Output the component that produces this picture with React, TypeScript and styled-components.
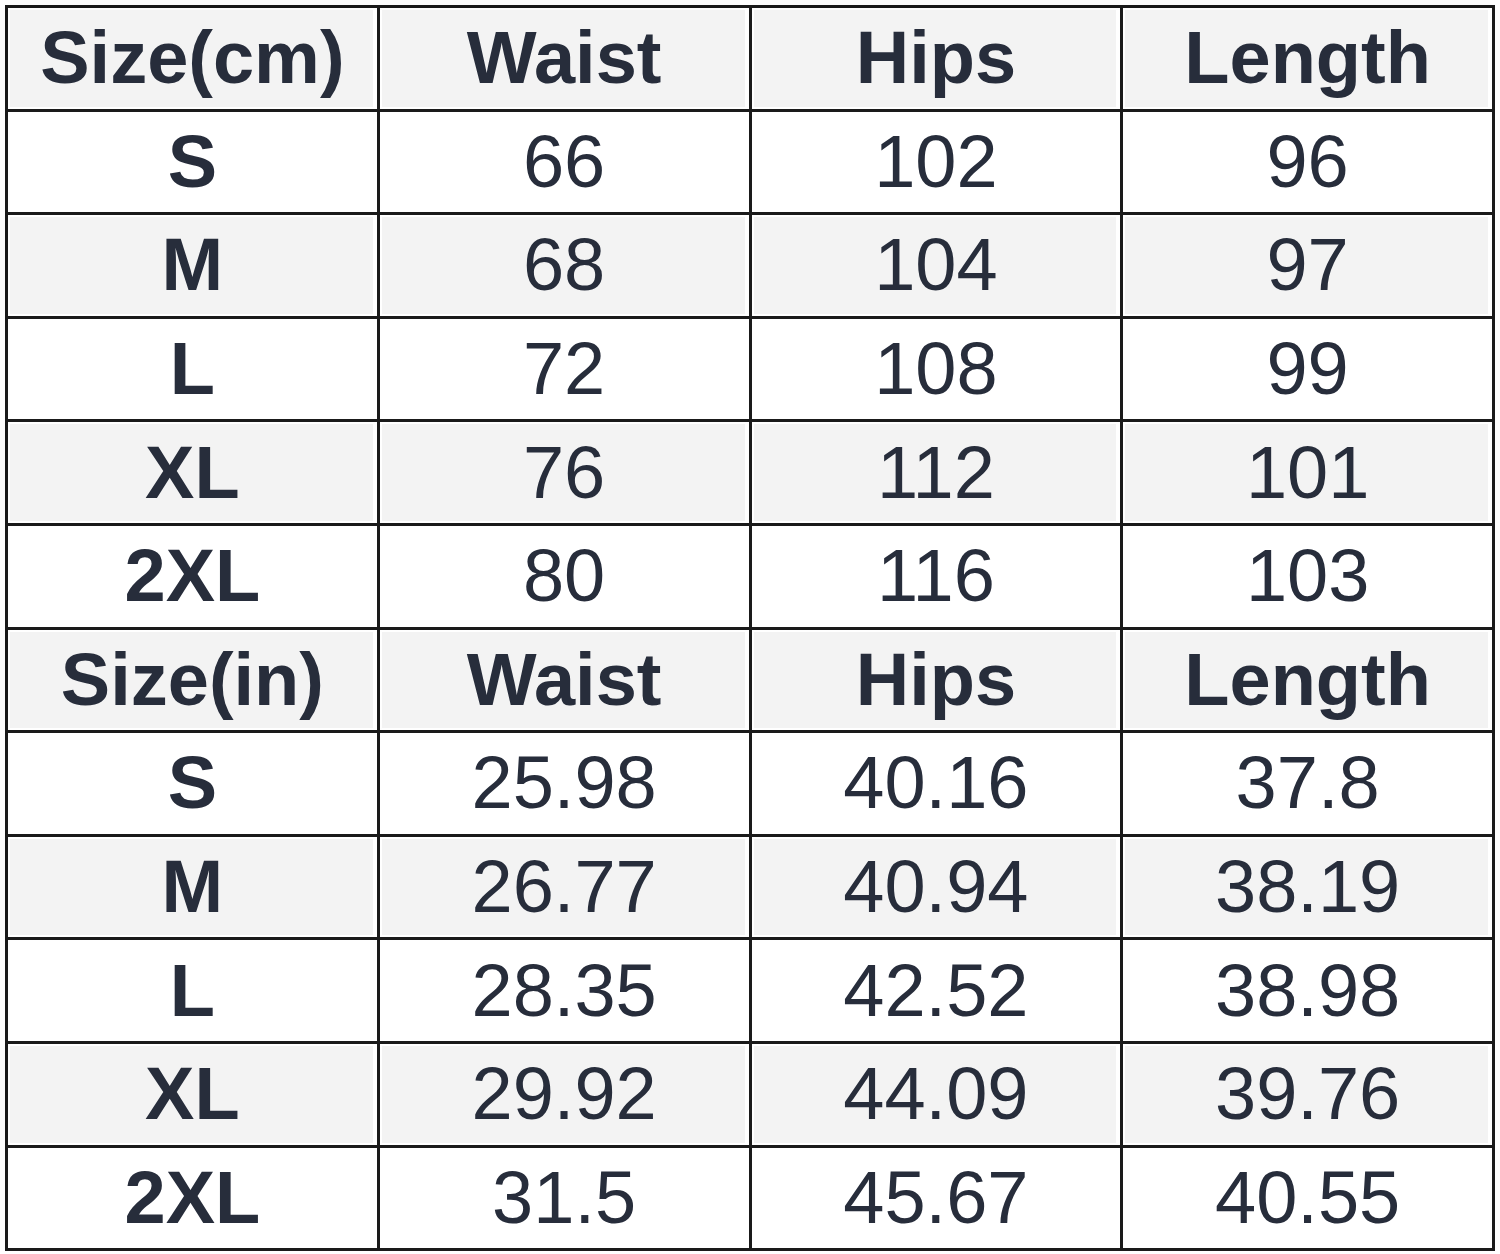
import { createGlobalStyle } from 'styled-components'
import styled from 'styled-components'

const GlobalStyle = createGlobalStyle`
  html, body {
    margin: 0;
    padding: 0;
    background: #ffffff;
  }
  body {
    font-family: "Liberation Sans", Arial, sans-serif;
  }
`

const Page = styled.div`
  padding: 5px 0 0 5px;
`

const Table = styled.table`
  border-collapse: collapse;
  table-layout: fixed;
  width: 1490px;
  color: #272d3b;
`

const Row = styled.tr<{ $shaded?: boolean }>`
  background: ${p => (p.$shaded ? '#f3f3f3' : '#ffffff')};
`

const Cell = styled.td<{ $bold?: boolean; $shaded?: boolean }>`
  border: 3px solid #1a1a1a;
  height: 100.6px;
  padding: 0;
  text-align: center;
  vertical-align: middle;
  font-size: 74px;
  line-height: 1;
  font-weight: ${p => (p.$bold ? 700 : 400)};
  box-shadow: ${p => (p.$shaded ? 'inset 2px 2px 0 #fff, inset -4px -2px 0 #fff' : 'none')};
`

type Block = { unit: string; rows: [string, string, string, string][] }

const blocks: Block[] = [
  {
    unit: 'Size(cm)',
    rows: [
      ['S', '66', '102', '96'],
      ['M', '68', '104', '97'],
      ['L', '72', '108', '99'],
      ['XL', '76', '112', '101'],
      ['2XL', '80', '116', '103'],
    ],
  },
  {
    unit: 'Size(in)',
    rows: [
      ['S', '25.98', '40.16', '37.8'],
      ['M', '26.77', '40.94', '38.19'],
      ['L', '28.35', '42.52', '38.98'],
      ['XL', '29.92', '44.09', '39.76'],
      ['2XL', '31.5', '45.67', '40.55'],
    ],
  },
]

export default function App() {
  return (
    <>
      <GlobalStyle />
      <Page>
        <Table>
          <tbody>
            {blocks.map(block => (
              <>
                <Row $shaded key={block.unit}>
                  {[block.unit, 'Waist', 'Hips', 'Length'].map(h => (
                    <Cell $bold $shaded key={h}>{h}</Cell>
                  ))}
                </Row>
                {block.rows.map((r, i) => (
                  <Row $shaded={i % 2 === 1} key={block.unit + r[0]}>
                    {r.map((v, j) => (
                      <Cell $bold={j === 0} $shaded={i % 2 === 1} key={j}>{v}</Cell>
                    ))}
                  </Row>
                ))}
              </>
            ))}
          </tbody>
        </Table>
      </Page>
    </>
  )
}
